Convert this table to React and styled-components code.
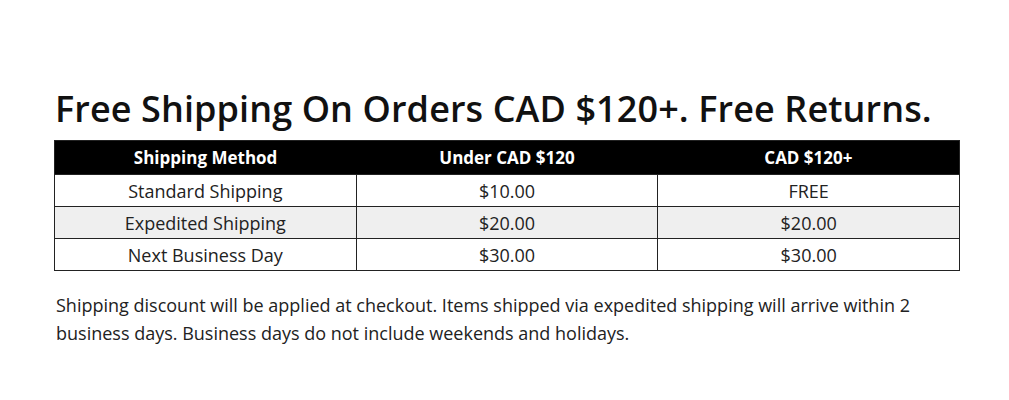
import React from 'react';
import styled, { createGlobalStyle } from 'styled-components';

const GlobalStyle = createGlobalStyle`
  html, body {
    margin: 0;
    padding: 0;
    background: #fff;
  }
  body {
    font-family: "Open Sans", Lato, Arial, sans-serif;
    color: #222;
  }
`;

const Page = styled.main`
  width: 1009px;
  height: 400px;
  box-sizing: border-box;
  padding: 88px 49px 0 54px;
`;

const Title = styled.h1`
  margin: 0 0 10px 1px;
  font-size: 36px;
  line-height: 42px;
  font-weight: 600;
  letter-spacing: 0.1px;
  color: #111;
`;

const Table = styled.table`
  width: 906px;
  border-collapse: collapse;
  table-layout: fixed;
  border: 1px solid #222;
`;

const HeadCell = styled.th`
  height: 33px;
  padding: 0;
  background: #000;
  color: #fff;
  font-size: 17px;
  font-weight: 700;
  text-align: center;
`;

const Row = styled.tr`
  background: ${props => (props.$shaded ? '#efefef' : '#fff')};
`;

const Cell = styled.td`
  height: 31px;
  padding: 0;
  border: 1px solid #222;
  font-size: 18px;
  text-align: center;
  color: #222;
`;

const Note = styled.p`
  margin: 20px 0 0 2px;
  width: 880px;
  font-size: 18px;
  line-height: 28px;
  color: #222;
`;

const rows = [
  ['Standard Shipping', '$10.00', 'FREE'],
  ['Expedited Shipping', '$20.00', '$20.00'],
  ['Next Business Day', '$30.00', '$30.00'],
];

export default function App() {
  return (
    <>
      <GlobalStyle />
      <Page>
        <Title>Free Shipping On Orders CAD $120+. Free Returns.</Title>
        <Table>
          <thead>
            <tr>
              <HeadCell>Shipping Method</HeadCell>
              <HeadCell>Under CAD $120</HeadCell>
              <HeadCell>CAD $120+</HeadCell>
            </tr>
          </thead>
          <tbody>
            {rows.map((r, i) => (
              <Row key={r[0]} $shaded={i === 1}>
                {r.map((c, j) => (
                  <Cell key={j}>{c}</Cell>
                ))}
              </Row>
            ))}
          </tbody>
        </Table>
        <Note>
          Shipping discount will be applied at checkout. Items shipped via expedited shipping will arrive within 2
          business days. Business days do not include weekends and holidays.
        </Note>
      </Page>
    </>
  );
}
